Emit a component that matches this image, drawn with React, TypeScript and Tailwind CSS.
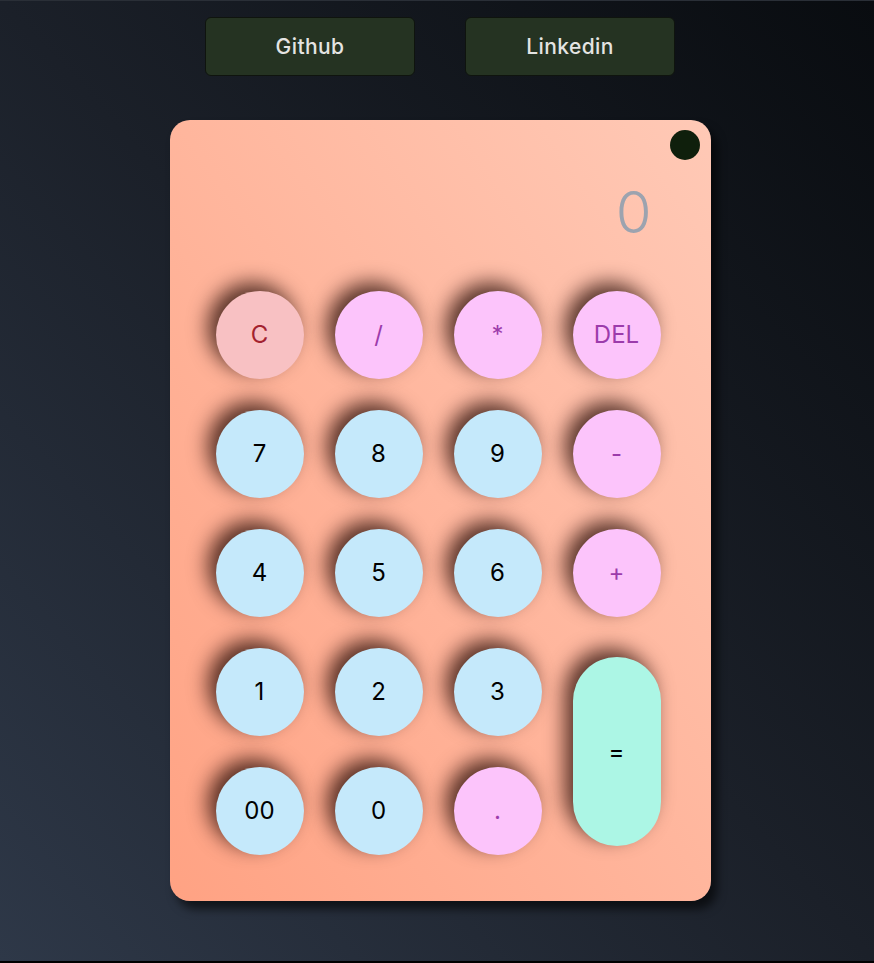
import React from "react";

type Key = { label: string; kind: "clear" | "op" | "num" };

const keys: Key[] = [
  { label: "C", kind: "clear" },
  { label: "/", kind: "op" },
  { label: "*", kind: "op" },
  { label: "DEL", kind: "op" },
  { label: "7", kind: "num" },
  { label: "8", kind: "num" },
  { label: "9", kind: "num" },
  { label: "-", kind: "op" },
  { label: "4", kind: "num" },
  { label: "5", kind: "num" },
  { label: "6", kind: "num" },
  { label: "+", kind: "op" },
  { label: "1", kind: "num" },
  { label: "2", kind: "num" },
  { label: "3", kind: "num" },
];

const kindClass = {
  clear: "bg-[#f8c1c3] text-[#a3222f]",
  op: "bg-[#fcc4fb] text-[#9c3bab]",
  num: "bg-[#c5e9fb] text-black",
};

function CalcKey({ k }: { k: Key }) {
  return (
    <button
      className={`w-[88px] h-[88px] rounded-full flex items-center justify-center text-[24px] shadow-[-8px_-8px_20px_rgba(30,5,0,0.75)] ${kindClass[k.kind]}`}
    >
      {k.label}
    </button>
  );
}

export default function App() {
  return (
    <section
      className="h-[963px] w-full border-t border-[#2a2f37] border-b-2 border-b-black bg-linear-to-tr from-[#2e3848] via-[#1b2029] to-[#090c10] flex flex-col items-center pt-[16px] pl-[6px]"
      style={{ fontFamily: "Inter, 'Liberation Sans', sans-serif" }}
    >
      {/* links */}
      <div className="flex gap-[50px]">
        <button className="w-[210px] h-[59px] rounded-[6px] bg-[#253322] border border-[#0f140e] text-[#e4e4e2] text-[21px] font-medium tracking-[0.4px]">
          Github
        </button>
        <button className="w-[210px] h-[59px] rounded-[6px] bg-[#253322] border border-[#0f140e] text-[#e4e4e2] text-[21px] font-medium tracking-[0.4px]">
          Linkedin
        </button>
      </div>

      {/* calculator */}
      <div className="relative mt-[44px] w-[541px] h-[781px] rounded-[20px] bg-linear-to-tr from-[#ffa283] to-[#ffc9b6] shadow-[6px_8px_10px_rgba(0,0,0,0.6)] flex flex-col pl-[46px] pr-[50px]">
        <span className="absolute top-[10px] right-[11px] w-[30px] h-[30px] rounded-full bg-[#0f1f0c]"></span>

        <div className="h-[171px] flex justify-end items-start pt-[63px] pr-[9px]">
          <span className="text-[58px] leading-none font-light text-[#9ca3af]">0</span>
        </div>

        <div className="grid grid-cols-4 gap-[31px]">
          {keys.map((k, i) => (
            <CalcKey key={i} k={k} />
          ))}
          <button className="row-span-2 self-center w-[88px] h-[189px] rounded-full bg-[#acf6e5] text-black text-[24px] flex items-center justify-center shadow-[-8px_-8px_20px_rgba(30,5,0,0.75)]">
            =
          </button>
          <CalcKey k={{ label: "00", kind: "num" }} />
          <CalcKey k={{ label: "0", kind: "num" }} />
          <CalcKey k={{ label: ".", kind: "op" }} />
        </div>
      </div>
    </section>
  );
}
